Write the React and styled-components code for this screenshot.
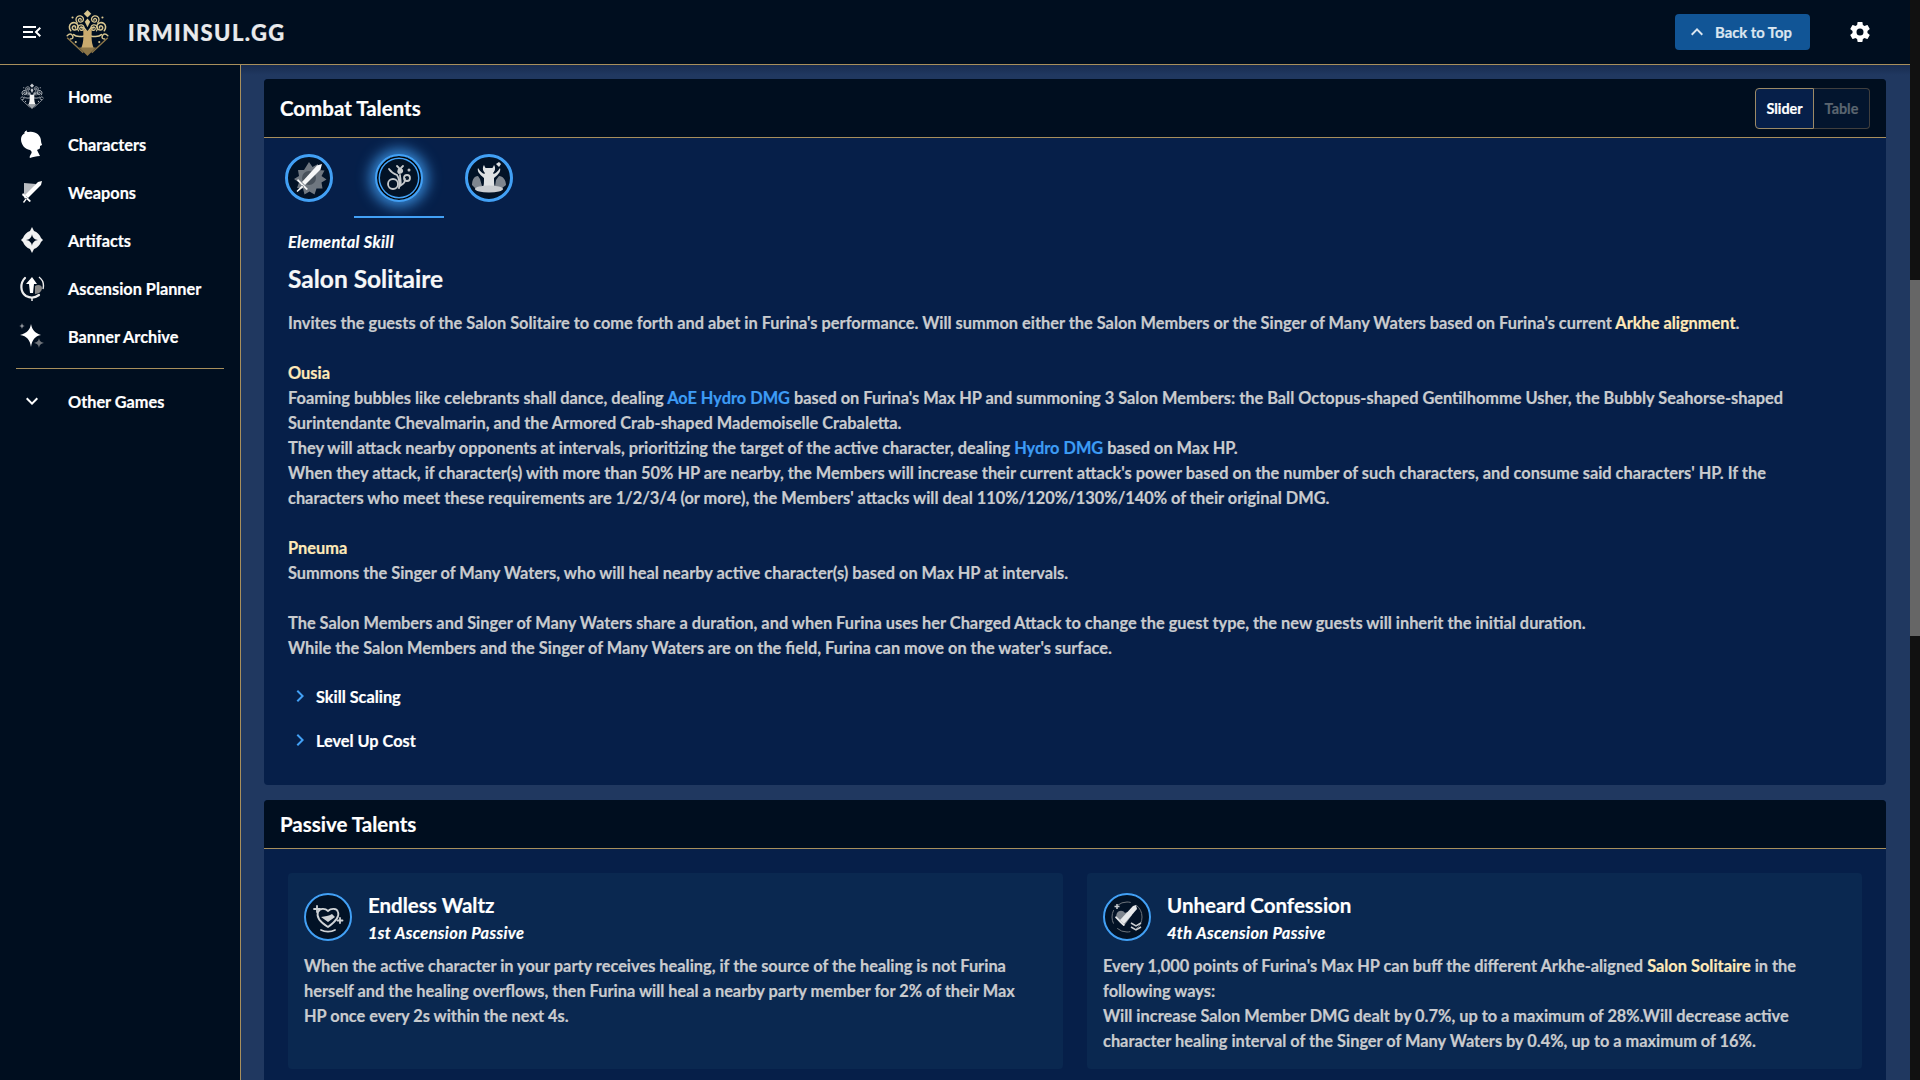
import React from 'react';
import styled, { createGlobalStyle } from 'styled-components';

const GOLD_LINE = '#a88f5c';
const DARK = '#000e1f';
const PANEL = '#061f49';
const PAGE = '#203860';
const BLUE = '#42a0f5';

const GlobalStyle = createGlobalStyle`
	html, body, #root{
		margin: 0;
		height: 100%;
		overflow: hidden;
	}
	body{
		font-family: Lato, "Liberation Sans", sans-serif;
		font-size: 16.3px;
		font-weight: 700;
		color: #fff;
		background: ${PAGE};
		-webkit-text-stroke: 0.2px currentColor;
	}
`;

const Frame = styled.div`
	display: flex;
	height: 1080px;
	overflow: hidden;
`;

const Shell = styled.div`
	flex: 1;
	min-width: 0;
	display: flex;
	flex-direction: column;
`;

const ScrollTrack = styled.div`
	width: 10px;
	flex: none;
	padding-top: 280px;
	background: #111;
`;

const ScrollThumb = styled.div`
	height: 356px;
	background: #666;
`;

const TopBar = styled.header`
	flex: none;
	height: 64px;
	display: flex;
	align-items: center;
	background: ${DARK};
	border-bottom: 1px solid ${GOLD_LINE};
`;

const MenuButton = styled.div`
	width: 64px;
	flex: none;
	display: flex;
	justify-content: center;
`;

const Brand = styled.div`
	display: flex;
	align-items: center;
	gap: 17px;
	margin-right: auto;
	font-size: 22px;
	font-weight: 900;
	letter-spacing: 1.4px;
	color: #e9eaec;
`;

const BackToTop = styled.button`
	width: 135px;
	height: 36px;
	display: flex;
	align-items: center;
	gap: 6px;
	padding: 0 0 0 10px;
	border: none;
	border-radius: 4px;
	background: #115596;
	color: #dbe6f0;
	font: 700 14.8px Lato, sans-serif;
`;

const GearButton = styled.div`
	width: 100px;
	flex: none;
	display: flex;
	justify-content: center;
`;

const Body = styled.div`
	flex: 1;
	min-height: 0;
	display: flex;
`;

const Sidebar = styled.nav`
	width: 240px;
	flex: none;
	padding-top: 7px;
	background: ${DARK};
	border-right: 1px solid ${GOLD_LINE};
`;

const NavRow = styled.div`
	height: 48px;
	display: flex;
	align-items: center;
	color: #fff;
`;

const NavIcon = styled.div`
	width: 68px;
	flex: none;
	display: flex;
	justify-content: center;
	padding-right: 4px;
	box-sizing: border-box;
`;

const NavDivider = styled.div`
	height: 1px;
	margin: 8px 16px;
	background: ${GOLD_LINE};
`;

const Main = styled.main`
	flex: 1;
	min-width: 0;
	display: flex;
	flex-direction: column;
	gap: 15px;
	padding: 14px 24px 0 23px;
	overflow: hidden;
	background: linear-gradient(#182c50, ${PAGE} 10px);
`;

const Panel = styled.section`
	flex: none;
	border-radius: 4px;
	background: ${PANEL};
	overflow: hidden;
`;

const PanelHeader = styled.div`
	height: ${(p) => p.$height}px;
	display: flex;
	align-items: center;
	justify-content: space-between;
	padding: 0 16px;
	background: ${DARK};
	border-bottom: 1px solid ${GOLD_LINE};
`;

const PanelTitle = styled.h2`
	margin: 0;
	font-size: 20.5px;
	font-weight: 700;
	color: #fff;
`;

const Toggle = styled.div`
	display: flex;
`;

const ToggleButton = styled.div`
	height: 41px;
	width: ${(p) => p.$width}px;
	display: flex;
	align-items: center;
	justify-content: center;
	box-sizing: border-box;
	font-size: 14.4px;
	color: ${(p) => (p.$active ? '#fff' : '#5b6570')};
	background: ${(p) => (p.$active ? PANEL : '#03152e')};
	border: 1px solid ${(p) => (p.$active ? '#9c8a66' : '#403f3e')};
	border-radius: ${(p) => (p.$active ? '4px 0 0 4px' : '0 4px 4px 0')};
	border-left-width: ${(p) => (p.$active ? 1 : 0)}px;
`;

const TabStrip = styled.div`
	display: flex;
	height: 80px;
`;

const Tab = styled.div`
	width: 90px;
	display: flex;
	align-items: center;
	justify-content: center;
	padding-top: 2px;
	box-sizing: border-box;
	border-bottom: 2px solid ${(p) => (p.$active ? BLUE : 'transparent')};
`;

const TalentIcon = styled.div`
	width: 48px;
	height: 48px;
	flex: none;
	box-sizing: border-box;
	border-radius: 50%;
	display: flex;
	align-items: center;
	justify-content: center;
	background: #021226;
	border: ${(p) => (p.$active || p.$thin ? 2 : 3)}px solid ${BLUE};
	box-shadow: ${(p) => (p.$active ? `0 0 14px 5px rgba(66, 160, 245, 0.8), inset 0 0 0 1.5px #000, inset 0 0 0 3px ${BLUE}` : 'none')};
`;

const TalentBody = styled.div`
	padding: 12px 24px 23px;
`;

const Kicker = styled.div`
	font-style: italic;
	font-size: 16.4px;
	line-height: 24px;
	letter-spacing: 0.35px;
	color: #fff;
`;

const TalentName = styled.h3`
	margin: 9px 0 15px;
	font-size: 24.5px;
	line-height: 32px;
	font-weight: 700;
	color: #f6f7f8;
`;

const Description = styled.div`
	font-size: 16.38px;
	line-height: 25px;
	color: #c9cbce;
`;

const TalentText = styled(Description)`
	padding-right: 20px;
`;

const Gap = styled.div`
	height: 25px;
`;

const Gold = styled.span`
	color: #ffe9b8;
`;

const Hydro = styled.span`
	color: #3d9cf5;
`;

const Expanders = styled.div`
	margin-top: 14px;
`;

const Expander = styled.div`
	height: 44px;
	display: flex;
	align-items: center;
	gap: 4px;
	color: #fff;
`;

const PassiveGrid = styled.div`
	display: grid;
	grid-template-columns: 1fr 1fr;
	gap: 24px;
	padding: 24px;
`;

const PassiveCard = styled.article`
	padding: 20px 16px 16px;
	border-radius: 4px;
	background: #0a2850;
`;

const PassiveHead = styled.div`
	display: flex;
	gap: 16px;
`;

const PassiveName = styled.div`
	font-size: 20.5px;
	line-height: 24px;
	color: #fff;
`;

const PassiveKind = styled(Kicker)`
	margin-top: 4px;
`;

const PassiveText = styled(Description)`
	margin-top: 8px;
	padding-right: 8px;
`;

// mdi glyphs
const MENU_OPEN = 'M21,15.61L19.59,17L14.58,12L19.59,7L21,8.39L17.44,12L21,15.61M3,6H16V8H3V6M3,13V11H13V13H3M3,18V16H16V18H3Z';
const COG = 'M12,15.5A3.5,3.5 0 0,1 8.5,12A3.5,3.5 0 0,1 12,8.5A3.5,3.5 0 0,1 15.5,12A3.5,3.5 0 0,1 12,15.5M19.43,12.97C19.47,12.65 19.5,12.33 19.5,12C19.5,11.67 19.47,11.34 19.43,11L21.54,9.37C21.73,9.22 21.78,8.95 21.66,8.73L19.66,5.27C19.54,5.05 19.27,4.96 19.05,5.05L16.56,6.05C16.04,5.66 15.5,5.32 14.87,5.07L14.5,2.42C14.46,2.18 14.25,2 14,2H10C9.75,2 9.54,2.18 9.5,2.42L9.13,5.07C8.5,5.32 7.96,5.66 7.44,6.05L4.95,5.05C4.73,4.96 4.46,5.05 4.34,5.27L2.34,8.73C2.21,8.95 2.27,9.22 2.46,9.37L4.57,11C4.53,11.34 4.5,11.67 4.5,12C4.5,12.33 4.53,12.65 4.57,12.97L2.46,14.63C2.27,14.78 2.21,15.05 2.34,15.27L4.34,18.73C4.46,18.95 4.73,19.03 4.95,18.95L7.44,17.94C7.96,18.34 8.5,18.68 9.13,18.93L9.5,21.58C9.54,21.82 9.75,22 10,22H14C14.25,22 14.46,21.82 14.5,21.58L14.87,18.93C15.5,18.67 16.04,18.34 16.56,17.94L19.05,18.95C19.27,19.03 19.54,18.95 19.66,18.73L21.66,15.27C21.78,15.05 21.73,14.78 21.54,14.63L19.43,12.97Z';
const CHEV_UP = 'M7.41,15.41L12,10.83L16.59,15.41L18,14L12,8L6,14L7.41,15.41Z';
const CHEV_DOWN = 'M7.41,8.58L12,13.17L16.59,8.58L18,10L12,16L6,10L7.41,8.58Z';
const CHEV_RIGHT = 'M8.59,16.58L13.17,12L8.59,7.41L10,6L16,12L10,18L8.59,16.58Z';

const Mdi = ({ d, size = 24, color = '#fff' }) => (
	<svg width={size} height={size} viewBox="0 0 24 24" fill={color}><path d={d} /></svg>
);

// one curl of the canopy, drawn around (0,0)
const Curl = ({ x, y, r = 3.4, flip, color }) => (
	<path
		transform={`translate(${x} ${y}) scale(${flip ? -r / 3.4 : r / 3.4} ${r / 3.4})`}
		d="M-1 .6c-.6-1.300.8-2.200 1.800-1.500 1.300 1 .6 3-1 3.200C-2.400 2.500-3.800.4-3 -1.500-2.100-3.600.6-4.200 2.300-3c1.800 1.300 2 4 .4 5.800"
		stroke={color}
		fill="none"
		strokeWidth="1.250"
		strokeLinecap="round"
	/>
);

// swirly world tree, used for the logo and the Home item
const Tree = ({ size, leaf, trunk, base }) => (
	<svg width={size} height={size} viewBox="0 0 44 44" fill="none">
		<Curl x={15} y={10} color={leaf} flip />
		<Curl x={29} y={10} color={leaf} />
		<Curl x={9.500} y={17} r={4} color={leaf} flip />
		<Curl x={34.500} y={17} r={4} color={leaf} />
		<Curl x={16} y={18} r={3} color={leaf} flip />
		<Curl x={28} y={18} r={3} color={leaf} />
		<g stroke={leaf} strokeWidth="1.400" strokeLinecap="round">
			<path d="M20 25c-4 1-9 1-11-1M24 25c4 1 9 1 11-1M21 21c-1-3-3-4-5-4M23 21c1-3 3-4 5-4" />
			<path d="M3 25c2-2 4-2 5 0s0 3-2 3M41 25c-2-2-4-2-5 0s0 3 2 3" />
		</g>
		<g fill={leaf}>
			<path d="M22 1l3.500 3.500L22 8l-3.500-3.500z" />
			<path d="M22 9l2.500 3-2.500 5-2.500-5z" />
			<circle cx="11" cy="31" r="1" />
			<circle cx="33" cy="31" r="1" />
			<circle cx="8" cy="8" r="1" />
			<circle cx="36" cy="8" r="1" />
		</g>
		<path d="M18 18c2 3 6 3 8 0 0 7-1 12 2 19H16c3-7 2-12 2-19z" fill={trunk} />
		<path d="M3 27l15 14M41 27L26 41" stroke={base} strokeWidth="1.300" />
		<path d="M14 36h16l-8 8z" fill={base} />
	</svg>
);

const CharacterGlyph = () => (
	<svg width="24" height="28" viewBox="0 0 24 28" fill="#fff">
		<path d="M6 1c1 1 2 1 3 1 6-1 12 3 12 9 0 2 1 3 1 4l-2 1c0 2 0 3-1 3l-2 1 3 6c-4 0-7 1-10 2-1-1 0-2 1-4 1-1 1-3-1-4-5-1-9-5-9-11 0-3 2-5 4-6-1 0 0-2 1-2z" />
		<path d="M5 3c0-1 1-2 2-2" stroke="#fff" fill="none" strokeWidth="1" />
	</svg>
);

const WeaponGlyph = () => (
	<svg width="24" height="24" viewBox="0 0 24 24">
		<path d="M4 3l12 1-2 3-7 7-3 5z" fill="#b9bcc1" />
		<path d="M22 1l-1 4L8 18l-3-3L18 2z" fill="#fff" />
		<path d="M3 13l8 8-1.500 1L2 15zM6 18l-3 4 1 1 3-4z" fill="#fff" />
	</svg>
);

const ArtifactGlyph = () => (
	<svg width="24" height="26" viewBox="0 0 24 26" fill="#f2f2f2">
		<path fillRule="evenodd" d="M12 0l2 4c3 1 6 4 7 7l2 2-2 2c-1 3-4 6-7 7l-2 4-2-4c-3-1-6-4-7-7l-2-2 2-2c1-3 4-6 7-7zM12 7c0 3-3 6-6 6 3 0 6 3 6 6 0-3 3-6 6-6-3 0-6-3-6-6z" />
	</svg>
);

const AscensionGlyph = () => (
	<svg width="26" height="26" viewBox="0 0 26 26" fill="none">
		<path d="M6 3C1 8 1 17 7 21c4 2 9 2 13-1" stroke="#eee" strokeWidth="2.200" strokeLinecap="round" />
		<path d="M20 2c4 3 5 8 4 12" stroke="#eee" strokeWidth="1.400" />
		<path d="M13 23v3" stroke="#eee" strokeWidth="1.500" />
		<path d="M16 11c3-2 7-1 7 2 0 3-3 6-7 6z" fill="#888" />
		<path d="M13 2l5 7h-3l-1 9h-3l-1-9H7z" fill="#fff" />
	</svg>
);

const BannerGlyph = () => (
	<svg width="26" height="26" viewBox="0 0 26 26">
		<path d="M12 1c1 6 4 9 10 11-6 1-9 5-10 12-1-7-4-11-11-12 7-2 10-5 11-11z" fill="#fff" />
		<path d="M3 0c.4 2 1 2.600 3 3-2 .4-2.600 1-3 3-.4-2-1-2.600-3-3 2-.4 2.600-1 3-3z" fill="#8a8f96" />
		<path d="M20 15c.6 3 1.500 4 5 5-3.500.7-4.400 2-5 5-.6-3-1.500-4.300-5-5 3.500-1 4.400-2 5-5z" fill="#6f747b" />
	</svg>
);

const AttackGlyph = () => (
	<svg width="36" height="36" viewBox="0 0 36 36">
		<path d="M18 2l3.500 5 5.500-3 .5 6 6 .5-3 5.500 5 3.500-5 3 1 6-6 0-2 6-5-3-5 3-1.500-6-6-.5 2-5.500-5-3.500 5-3-1-6 6 0z" fill="#6f7780" />
		<circle cx="18" cy="18" r="7" fill="#49525c" />
		<path d="M31 4l-1.500 5.500L14 25l-3-3L26 5.500z" fill="#f6f7f8" />
		<path d="M7 19l10 10-1.500 1L6 20.500zM11.500 25l-6 6 1 1 6.500-5.500z" fill="#f6f7f8" />
	</svg>
);

const SkillGlyph = () => (
	<svg width="34" height="34" viewBox="0 0 34 34" fill="none" stroke="#c6c9cc" strokeWidth="1.800" strokeLinecap="round">
		<circle cx="11" cy="23" r="5" />
		<circle cx="25" cy="17" r="3" />
		<path d="M15 14c-3-1-6-3-8-6M15 14c2 3 3 6 2 13M18 14c0 4 2 7 0 11 3-2 5-3 5-7" />
		<path d="M17 12c-2-2 0-5 2-4s2 4-2 4z" fill="#c6c9cc" />
		<path d="M15 5l2 2M21 5l-2 2" />
		<circle cx="27" cy="9" r=".6" />
	</svg>
);

const BurstGlyph = () => (
	<svg width="38" height="38" viewBox="0 0 38 38">
		<path d="M2 26c0-5 2-9 6-9l2 3 2 7-6 3zM36 26c0-5-3-9-7-9l-3 4-1 6 6 3z" fill="#7f868f" />
		<path d="M14 6c1 2 1 3 2 3h6c1 0 1-1 2-3 2 3 1 6-1 8 0 2 4 0 7-5 1 3-1 6-6 10 0 4 0 7 1 10H13c1-3 1-6 1-10C9 15 7 12 8 9c3 5 7 7 7 5-2-2-3-5-1-8z" fill="#dfe1e3" />
		<ellipse cx="19" cy="30" rx="14" ry="3.500" fill="#c9ccd0" />
		<path d="M26 5l3-2 2 2-2 3z" fill="#dfe1e3" />
	</svg>
);

const WaltzGlyph = () => (
	<svg width="36" height="36" viewBox="0 0 36 36" fill="none" stroke="#d0d3d6" strokeWidth="1.800" strokeLinecap="round">
		<path d="M18 28C10 23 6 18 8 13c2-4 7-4 10-1 3-3 9-3 10 1 2 5-3 10-10 15z" />
		<path d="M11 18l7 5 7-5-3-3c-3 2-7 2-11 3z" fill="#d0d3d6" stroke="none" />
		<path d="M7 7v6M4 10h6M30 19v5M27.500 21.500h5M11 31c4 2 10 2 14 0" />
	</svg>
);

const ConfessionGlyph = () => (
	<svg width="36" height="36" viewBox="0 0 36 36" fill="none">
		<circle cx="18" cy="18" r="15" stroke="#6d747c" strokeWidth="1" strokeDasharray="14 6" />
		<path d="M15 27C8 22 6 18 8 14c2-3 6-3 8 0 3-2 6-1 7 2z" fill="#7f868f" />
		<path d="M27 6l1 4-13 15-4-4L24 7z" fill="#e6e8ea" />
		<path d="M7 17l9 9-1.500 1L6 18.500z" fill="#e6e8ea" />
		<path d="M8 5v5M5.500 7.500h5M22 24l5 3 5-3M22 28l5 3 5-3" stroke="#c9ccd0" strokeWidth="1.500" />
	</svg>
);

const NAV = [
	{ label: 'Home', icon: <Tree size={26} leaf="#c8ccd1" trunk="#f4f4f4" base="#9ba0a6" /> },
	{ label: 'Characters', icon: <CharacterGlyph /> },
	{ label: 'Weapons', icon: <WeaponGlyph /> },
	{ label: 'Artifacts', icon: <ArtifactGlyph /> },
	{ label: 'Ascension Planner', icon: <AscensionGlyph /> },
	{ label: 'Banner Archive', icon: <BannerGlyph /> },
];

const TABS = [
	{ key: 'attack', icon: <AttackGlyph /> },
	{ key: 'skill', icon: <SkillGlyph />, active: true },
	{ key: 'burst', icon: <BurstGlyph /> },
];

export default function App() {
	return (
		<Frame>
			<GlobalStyle />
			<Shell>
				<TopBar>
					<MenuButton><Mdi d={MENU_OPEN} /></MenuButton>
					<Brand>
						<Tree size={47} leaf="#d8c690" trunk="#c9aa6e" base="#8d7648" />
						IRMINSUL.GG
					</Brand>
					<BackToTop><Mdi d={CHEV_UP} size={24} color="#dbe6f0" />Back to Top</BackToTop>
					<GearButton><Mdi d={COG} /></GearButton>
				</TopBar>
				<Body>
					<Sidebar>
						{NAV.map((n) => (
							<NavRow key={n.label}><NavIcon>{n.icon}</NavIcon>{n.label}</NavRow>
						))}
						<NavDivider />
						<NavRow><NavIcon><Mdi d={CHEV_DOWN} /></NavIcon>Other Games</NavRow>
					</Sidebar>
					<Main>
						<Panel>
							<PanelHeader $height={58}>
								<PanelTitle>Combat Talents</PanelTitle>
								<Toggle>
									<ToggleButton $active $width={59}>Slider</ToggleButton>
									<ToggleButton $width={56}>Table</ToggleButton>
								</Toggle>
							</PanelHeader>
							<TabStrip>
								{TABS.map((t) => (
									<Tab key={t.key} $active={t.active}>
										<TalentIcon $active={t.active}>{t.icon}</TalentIcon>
									</Tab>
								))}
							</TabStrip>
							<TalentBody>
								<Kicker>Elemental Skill</Kicker>
								<TalentName>Salon Solitaire</TalentName>
								<TalentText>
									Invites the guests of the Salon Solitaire to come forth and abet in Furina's performance. Will summon either the Salon Members or the Singer of Many Waters based on Furina's current <Gold>Arkhe alignment</Gold>.
									<Gap />
									<Gold>Ousia</Gold><br />
									Foaming bubbles like celebrants shall dance, dealing <Hydro>AoE Hydro DMG</Hydro> based on Furina's Max HP and summoning 3 Salon Members: the Ball Octopus-shaped Gentilhomme Usher, the Bubbly Seahorse-shaped Surintendante Chevalmarin, and the Armored Crab-shaped Mademoiselle Crabaletta.<br />
									They will attack nearby opponents at intervals, prioritizing the target of the active character, dealing <Hydro>Hydro DMG</Hydro> based on Max HP.<br />
									When they attack, if character(s) with more than 50% HP are nearby, the Members will increase their current attack's power based on the number of such characters, and consume said characters' HP. If the characters who meet these requirements are 1/2/3/4 (or more), the Members' attacks will deal 110%/120%/130%/140% of their original DMG.
									<Gap />
									<Gold>Pneuma</Gold><br />
									Summons the Singer of Many Waters, who will heal nearby active character(s) based on Max HP at intervals.
									<Gap />
									The Salon Members and Singer of Many Waters share a duration, and when Furina uses her Charged Attack to change the guest type, the new guests will inherit the initial duration.<br />
									While the Salon Members and the Singer of Many Waters are on the field, Furina can move on the water's surface.
								</TalentText>
								<Expanders>
									<Expander><Mdi d={CHEV_RIGHT} color={BLUE} />Skill Scaling</Expander>
									<Expander><Mdi d={CHEV_RIGHT} color={BLUE} />Level Up Cost</Expander>
								</Expanders>
							</TalentBody>
						</Panel>
						<Panel>
							<PanelHeader $height={48}>
								<PanelTitle>Passive Talents</PanelTitle>
							</PanelHeader>
							<PassiveGrid>
								<PassiveCard>
									<PassiveHead>
										<TalentIcon $thin><WaltzGlyph /></TalentIcon>
										<div>
											<PassiveName>Endless Waltz</PassiveName>
											<PassiveKind>1st Ascension Passive</PassiveKind>
										</div>
									</PassiveHead>
									<PassiveText>
										When the active character in your party receives healing, if the source of the healing is not Furina herself and the healing overflows, then Furina will heal a nearby party member for 2% of their Max HP once every 2s within the next 4s.
									</PassiveText>
								</PassiveCard>
								<PassiveCard>
									<PassiveHead>
										<TalentIcon $thin><ConfessionGlyph /></TalentIcon>
										<div>
											<PassiveName>Unheard Confession</PassiveName>
											<PassiveKind>4th Ascension Passive</PassiveKind>
										</div>
									</PassiveHead>
									<PassiveText>
										Every 1,000 points of Furina's Max HP can buff the different Arkhe-aligned <Gold>Salon Solitaire</Gold> in the following ways:<br />
										Will increase Salon Member DMG dealt by 0.7%, up to a maximum of 28%.Will decrease active character healing interval of the Singer of Many Waters by 0.4%, up to a maximum of 16%.
									</PassiveText>
								</PassiveCard>
							</PassiveGrid>
						</Panel>
					</Main>
				</Body>
			</Shell>
			<ScrollTrack><ScrollThumb /></ScrollTrack>
		</Frame>
	);
}
